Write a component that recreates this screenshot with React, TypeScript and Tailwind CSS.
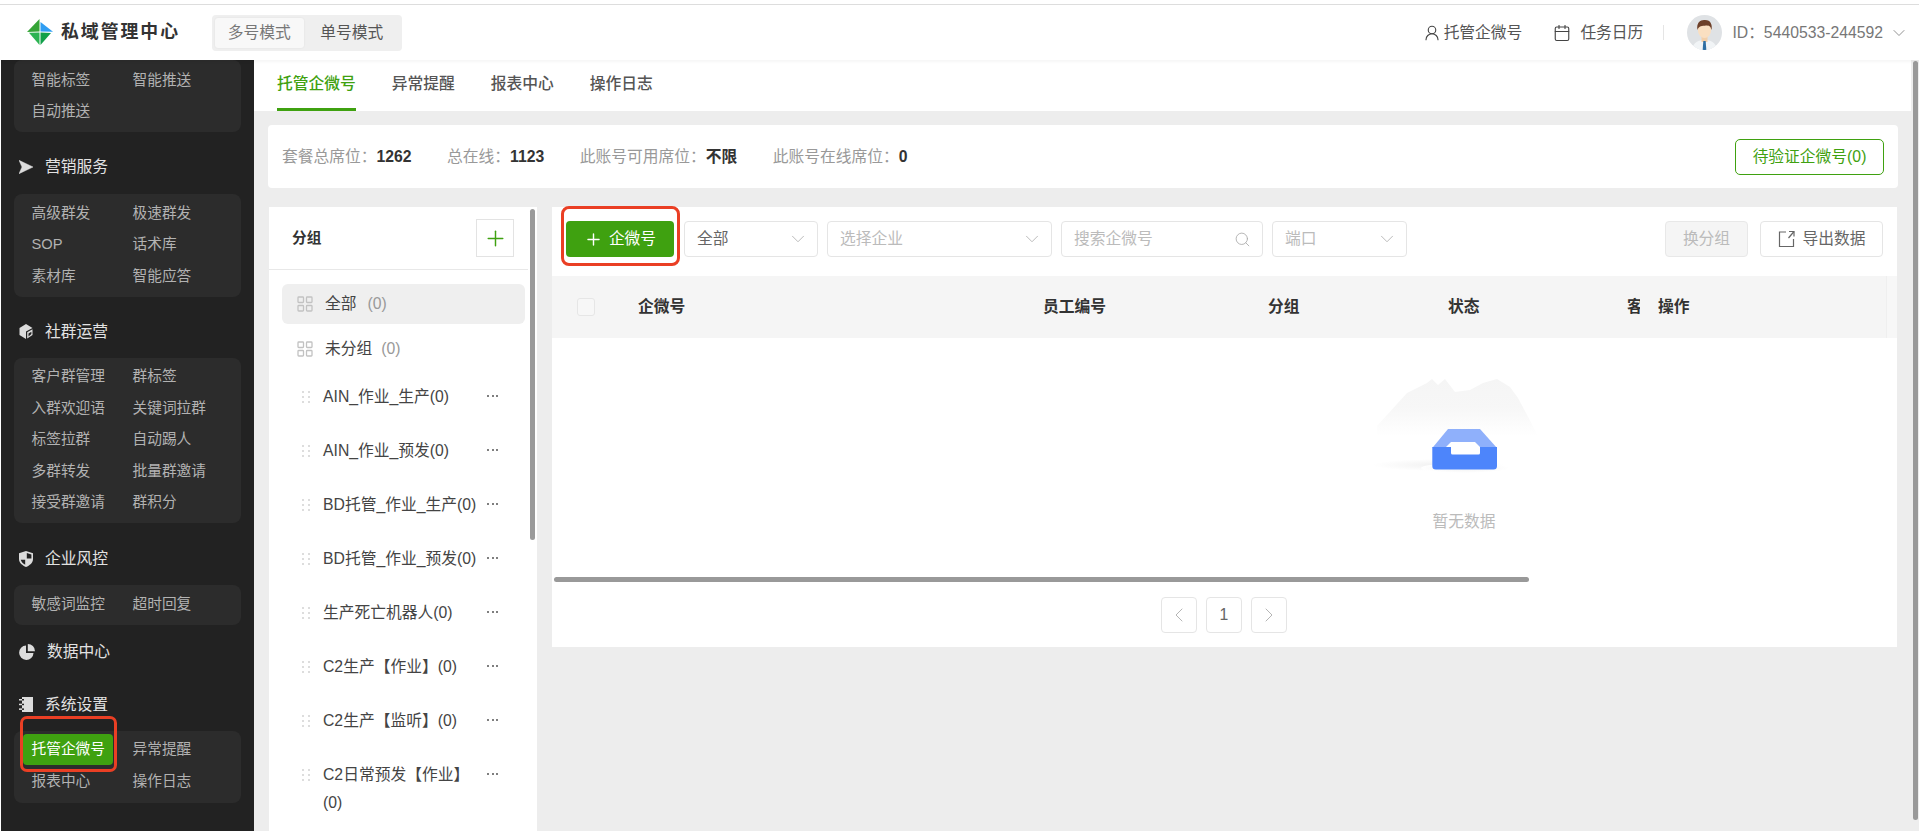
import React from "react";
import { ChevronDown, ChevronLeft, ChevronRight, Plus, Search, UserRound, Calendar } from "lucide-react";

const FONT = '"Liberation Sans","Noto Sans CJK SC",sans-serif';

function Logo() {
  return (
    <svg viewBox="0 0 26 26" className="w-[26px] h-[26px]">
      <polygon points="12.5,0 12.5,12.5 0,13" fill="#35a436" />
      <polygon points="13.5,3 13.5,12.5 26,12.8" fill="#2f9df2" />
      <polygon points="2,13.8 12.5,13.5 12.5,26" fill="#2db352" />
      <polygon points="13.5,13.5 24,14 13.5,26" fill="#12a04a" />
    </svg>
  );
}

function Avatar() {
  return (
    <svg viewBox="0 0 35 35" className="w-[35px] h-[35px]">
      <defs>
        <clipPath id="av"><circle cx="17.5" cy="17.5" r="17.5" /></clipPath>
      </defs>
      <g clipPath="url(#av)">
        <rect width="35" height="35" fill="#dfe2e5" />
        <path d="M5 35 C6 27 12 25 17.5 25 C23 25 29 27 30 35 Z" fill="#f1f4f6" />
        <rect x="14.5" y="20" width="6" height="7" fill="#f3cfa9" />
        <ellipse cx="17.5" cy="15" rx="6.6" ry="8" fill="#fadfc1" />
        <path d="M10.5 15 C9 7 14 4.5 18 5 C24 5 25.5 10 24.5 15 C23.5 11 22 10.5 19 10.5 C15 11 12 10.5 10.5 15 Z" fill="#6d3f28" />
        <polygon points="16.3,26 18.7,26 19.3,35 15.7,35" fill="#2f6ea3" />
      </g>
    </svg>
  );
}

function SendIcon() {
  return (
    <svg viewBox="0 0 14 14" className="w-[14px] h-[14px]"><polygon points="0,0.3 14,7 0,13.7 3,7" fill="#dcdcdc" stroke="#dcdcdc" strokeWidth="0.5" strokeLinejoin="round" /></svg>
  );
}
function CubeIcon() {
  return (
    <svg viewBox="0 0 14 15" className="w-[14px] h-[15px]">
      <polygon points="0.5,4 7,0 13.5,4 7,7.5 7,15 0.5,11" fill="#dcdcdc" />
      <polygon points="8.2,8.2 13.5,5.3 13.5,11 8.2,14.5" fill="#dcdcdc" />
      <path d="M9.5 9.5 L12.4 7.8 L12.4 10 L9.5 12.6 Z" fill="#222222" />
    </svg>
  );
}
function ShieldIcon() {
  return (
    <svg viewBox="0 0 14 16" className="w-[14px] h-[16px]">
      <path d="M7 0 L14 2.2 L14 8 C14 12 10.5 14.5 7 16 C3.5 14.5 0 12 0 8 L0 2.2 Z" fill="#dcdcdc" />
      <path d="M7.8 2 L12.4 3.4 L12.4 7.4 L7.8 7.4 Z" fill="#222222" />
      <path d="M1.7 8.8 L6.2 8.8 L6.2 13.8 C4 12.8 2.3 11 1.7 8.8 Z" fill="#222222" />
    </svg>
  );
}
function PieIcon() {
  return (
    <svg viewBox="0 0 16 16" className="w-[16px] h-[16px]">
      <path d="M7 1.5 A7.2 7.2 0 1 0 14.5 9 L7 9 Z" fill="#dcdcdc" />
      <path d="M8.8 0 A7.2 7.2 0 0 1 16 7.2 L8.8 7.2 Z" fill="#dcdcdc" />
    </svg>
  );
}
function BookIcon() {
  return (
    <svg viewBox="0 0 14 15" className="w-[14px] h-[15px]">
      <rect x="3" y="0" width="11" height="15" fill="#dcdcdc" />
      <rect x="0" y="2" width="3" height="1.5" fill="#dcdcdc" />
      <rect x="0" y="6.7" width="3" height="1.5" fill="#dcdcdc" />
      <rect x="0" y="11.4" width="3" height="1.5" fill="#dcdcdc" />
      <rect x="3" y="2" width="2" height="1.5" fill="#222222" />
      <rect x="3" y="6.7" width="2" height="1.5" fill="#222222" />
      <rect x="3" y="11.4" width="2" height="1.5" fill="#222222" />
    </svg>
  );
}

function ExportIcon() {
  return (
    <svg viewBox="0 0 17 18" className="w-[17px] h-[18px]" fill="none" stroke="#666666" strokeWidth="1.2">
      <path d="M8 2 H1.5 V16.5 H15.5 V9" />
      <path d="M11 1.5 H16 V6.5" />
      <path d="M16 1.5 L10.5 8" />
    </svg>
  );
}

function NavHead({ icon, label, className, gap }: { icon: React.ReactNode; label: string; className: string; gap: string }) {
  return (
    <div className={`flex items-center pl-[5px] ${gap} ${className}`}>
      {icon}
      <span className="text-[15.75px] text-[#e2e2e2]">{label}</span>
    </div>
  );
}

function NavPanel({ items, active, className = "" }: { items: string[]; active?: string; className?: string }) {
  return (
    <div className={`grid grid-cols-[101px_101px] auto-rows-[31.5px] bg-[#2c2c2c] rounded-[8px] px-[9px] pb-[5px] ${className}`}>
      {items.map((t) =>
        t === active ? (
          <div key={t} className="relative flex items-center h-[31px] w-[90px] pl-[8.5px] rounded-[4px] bg-[#3fa110] text-white text-[14.7px]">
            {t}
            <div className="absolute -left-[3px] -right-[4px] -top-[18px] -bottom-[7px] border-[3px] border-[#ea3f24] rounded-[7px]" />
          </div>
        ) : (
          <div key={t} className="flex items-center pl-[8.5px] text-[14.7px] text-[#b2b2b2] whitespace-nowrap">{t}</div>
        )
      )}
    </div>
  );
}

function Sidebar() {
  return (
    <aside className="w-[253px] shrink-0 bg-[#222222] px-[13px] overflow-hidden">
      <NavPanel items={["智能标签", "智能推送", "自动推送"]} className="pt-[4px] mb-[1px]" />
      <NavHead icon={<SendIcon />} label="营销服务" className="h-[61px] pt-[7px]" gap="gap-[12px]" />
      <NavPanel items={["高级群发", "极速群发", "SOP", "话术库", "素材库", "智能应答"]} className="pt-[3px]" />
      <NavHead icon={<CubeIcon />} label="社群运营" className="h-[61px] pt-[9px]" gap="gap-[12px]" />
      <NavPanel items={["客户群管理", "群标签", "入群欢迎语", "关键词拉群", "标签拉群", "自动踢人", "多群转发", "批量群邀请", "接受群邀请", "群积分"]} className="pt-[3px]" />
      <NavHead icon={<ShieldIcon />} label="企业风控" className="h-[62px] pt-[10px]" gap="gap-[12px]" />
      <NavPanel items={["敏感词监控", "超时回复"]} className="pt-[3px]" />
      <NavHead icon={<PieIcon />} label="数据中心" className="h-[54px]" gap="gap-[12px]" />
      <NavHead icon={<BookIcon />} label="系统设置" className="h-[52px]" gap="gap-[12px]" />
      <NavPanel items={["托管企微号", "异常提醒", "报表中心", "操作日志"]} active="托管企微号" className="pt-[3px] pb-[6px]" />
    </aside>
  );
}

function GridIcon() {
  return (
    <svg viewBox="0 0 16 16" className="w-[16px] h-[16px]" fill="none" stroke="#c2c2c2" strokeWidth="1.3">
      <rect x="1" y="1" width="5.5" height="5.5" rx="0.8" />
      <rect x="9.5" y="1" width="5.5" height="5.5" rx="0.8" />
      <rect x="1" y="9.5" width="5.5" height="5.5" rx="0.8" />
      <rect x="9.5" y="9.5" width="5.5" height="5.5" rx="0.8" />
    </svg>
  );
}

function Grip() {
  return (
    <div className="grid grid-cols-2 gap-x-[4px] gap-y-[3px] w-[8px] shrink-0">
      {[0, 1, 2, 3, 4, 5].map((i) => (
        <span key={i} className="w-[2px] h-[2px] bg-[#dddddd]" />
      ))}
    </div>
  );
}

function GroupRow({ label }: { label: string }) {
  return (
    <div className="flex items-start py-[13px] pl-[20px]">
      <div className="h-[28px] flex items-center"><Grip /></div>
      <div className="w-[158px] ml-[13px] text-[15.75px] leading-[28px] text-[#444444]">{label}</div>
      <div className="h-[26px] ml-[6px] flex items-center gap-[2.5px]">
        <span className="w-[2px] h-[2px] rounded-full bg-[#555555]" />
        <span className="w-[2px] h-[2px] rounded-full bg-[#555555]" />
        <span className="w-[2px] h-[2px] rounded-full bg-[#555555]" />
      </div>
    </div>
  );
}

function GroupPanel() {
  const rows = ["AIN_作业_生产(0)", "AIN_作业_预发(0)", "BD托管_作业_生产(0)", "BD托管_作业_预发(0)", "生产死亡机器人(0)", "C2生产【作业】(0)", "C2生产【监听】(0)", "C2日常预发【作业】(0)"];
  return (
    <section className="relative w-[268px] h-[640px] shrink-0 bg-white">
      <div className="w-[259px] h-[63px] pl-[23px] pr-[14px] flex items-center justify-between border-b border-[#e8e8e8]">
        <span className="text-[14.7px] font-bold text-[#333333]">分组</span>
        <div className="w-[38px] h-[38px] border border-[#e3e3e3] flex items-center justify-center">
          <Plus className="w-[25px] h-[25px] text-[#3fa110]" strokeWidth={1.4} />
        </div>
      </div>
      <div className="pl-[13px] pt-[14px] w-[256px]">
        <div className="flex items-center h-[40px] rounded-[6px] bg-[#efefef] pl-[15px] gap-[12px] text-[15.75px] text-[#444444]">
          <GridIcon />
          <span>全部</span>
          <span className="text-[#999999] -ml-[1px]">(0)</span>
        </div>
        <div className="flex items-center h-[40px] mt-[5px] mb-[1px] pl-[15px] gap-[12px] text-[15.75px] text-[#444444]">
          <GridIcon />
          <span>未分组</span>
          <span className="text-[#999999] -ml-[3px]">(0)</span>
        </div>
        {rows.map((r) => (
          <GroupRow key={r} label={r} />
        ))}
      </div>
      <div className="absolute left-[261px] top-[2px] w-[5px] h-[331px] rounded-[3px] bg-[#9a9a9a]" />
    </section>
  );
}

function Select({ w, label, muted }: { w: string; label: string; muted?: boolean }) {
  return (
    <div className={`flex items-center justify-between h-[36px] ${w} pl-[12px] pr-[8px] border border-[#e5e5e5] rounded-[4px] text-[15.75px] bg-white ${muted ? "text-[#bbbbbb]" : "text-[#666666]"}`}>
      <span>{label}</span>
      <ChevronDown className="w-[22px] h-[22px] text-[#b5b5b5]" strokeWidth={1} />
    </div>
  );
}

function EmptyArt() {
  return (
    <svg viewBox="0 0 208 120" className="w-[208px] h-[120px]">
      <defs>
        <linearGradient id="mt" x1="0" y1="0" x2="0" y2="1">
          <stop offset="0" stopColor="#f5f5f5" />
          <stop offset="0.5" stopColor="#f7f7f7" />
          <stop offset="1" stopColor="#ffffff" />
        </linearGradient>
        <radialGradient id="gr">
          <stop offset="0" stopColor="#f1f1f1" />
          <stop offset="1" stopColor="#ffffff" />
        </radialGradient>
      </defs>
      <path d="M17 56 L47 23 L67 13 L72 9 L78 15 L85 9 L95 22 L110 20 L123 13 L137 9 L150 17 L158 28 L166 43 L178 66 L17 66 Z" fill="url(#mt)" />
      <ellipse cx="79" cy="95" rx="66" ry="6" fill="url(#gr)" />
      <ellipse cx="105" cy="98" rx="44" ry="5" fill="url(#gr)" />
      <polygon points="72.3,78 88,59 120,59 137,78" fill="#8fb0fb" />
      <path d="M72.3 77 H137 V96 Q137 99.5 133.5 99.5 H75.8 Q72.3 99.5 72.3 96 Z" fill="#4d85fb" />
      <polygon points="86,77 91,72 115,72 120,77" fill="#ffffff" />
      <path d="M91 77 H120 V83 Q120 84.5 118.5 84.5 H92.5 Q91 84.5 91 83 Z" fill="#ffffff" />
    </svg>
  );
}

function TablePanel() {
  return (
    <section className="w-[1345px] shrink-0 bg-white">
      <div className="flex items-start h-[69px] pt-[14px] pl-[14px] pr-[14px]">
        <div className="relative mr-[10px]">
          <div className="flex items-center justify-center gap-[6px] w-[108px] h-[36px] rounded-[4px] bg-[#3fa110] text-white text-[15.75px]">
            <Plus className="w-[19px] h-[19px]" strokeWidth={1.8} />
            <span>企微号</span>
          </div>
          <div className="absolute -left-[5px] -right-[6px] -top-[15px] -bottom-[9px] border-[3px] border-[#ea3f24] rounded-[8px]" />
        </div>
        <div className="flex gap-[9px]">
          <Select w="w-[134px]" label="全部" />
          <Select w="w-[225px]" label="选择企业" muted />
          <div className="flex items-center justify-between h-[36px] w-[202px] pl-[12px] pr-[11px] border border-[#e5e5e5] rounded-[4px] text-[15.75px] text-[#bbbbbb]">
            <span>搜索企微号</span>
            <Search className="w-[17px] h-[17px] text-[#aaaaaa]" strokeWidth={1.2} />
          </div>
          <Select w="w-[135px]" label="端口" muted />
        </div>
        <div className="ml-auto flex items-center gap-[12px]">
          <div className="flex items-center justify-center w-[83px] h-[36px] rounded-[4px] border border-[#e8e8e8] bg-[#f5f5f5] text-[15.75px] text-[#bbbbbb]">换分组</div>
          <div className="flex items-center justify-center gap-[8px] w-[123px] h-[36px] rounded-[4px] border border-[#e5e5e5] text-[15.75px] text-[#666666]">
            <ExportIcon />
            <span>导出数据</span>
          </div>
        </div>
      </div>
      <div className="flex h-[62px] bg-[#f7f7f7]">
        <div className="w-[1335px] grid grid-cols-[86px_405px_225px_180px_179px_31px_1fr] items-center bg-[#f5f5f5] border-r border-[#efefef] text-[15.75px] font-bold text-[#333333]">
          <div className="pl-[25px]"><div className="w-[18px] h-[18px] rounded-[3px] border border-[#e6e6e6] bg-[#f7f7f7]" /></div>
          <div>企微号</div>
          <div>员工编号</div>
          <div>分组</div>
          <div>状态</div>
          <div className="overflow-hidden whitespace-nowrap w-[12.5px]">客户</div>
          <div>操作</div>
        </div>
      </div>
      <div className="h-[239px] overflow-hidden">
        <div className="w-[1824px] flex flex-col items-center pt-[32px]">
          <EmptyArt />
          <div className="mt-[20px] text-[15.75px] leading-[24px] text-[#bbbbbb]">暂无数据</div>
        </div>
      </div>
      <div className="ml-[2px] w-[975px] h-[5px] rounded-[3px] bg-[#999999]" />
      <div className="flex justify-center gap-[9px] mt-[15px] pb-[14px] pr-[1px]">
        <div className="w-[36px] h-[36px] rounded-[4px] border border-[#e5e5e5] flex items-center justify-center"><ChevronLeft className="w-[24px] h-[24px] text-[#b5b5b5]" strokeWidth={1} /></div>
        <div className="w-[36px] h-[36px] rounded-[4px] border border-[#e5e5e5] flex items-center justify-center text-[15.75px] text-[#666666]">1</div>
        <div className="w-[36px] h-[36px] rounded-[4px] border border-[#e5e5e5] flex items-center justify-center"><ChevronRight className="w-[24px] h-[24px] text-[#b5b5b5]" strokeWidth={1} /></div>
      </div>
    </section>
  );
}

function Stat({ label, value }: { label: string; value: string }) {
  return (
    <div className="text-[15.75px] whitespace-nowrap">
      <span className="text-[#999999]">{label}</span>
      <span className="font-bold text-[#333333]">{value}</span>
    </div>
  );
}

export default function App() {
  return (
    <div className="w-[1919px] h-[831px] overflow-hidden flex flex-col bg-white" style={{ fontFamily: FONT }}>
      <header className="relative z-10 h-[60px] shrink-0 pt-[4px] bg-white shadow-[0_1px_4px_rgba(0,0,0,0.06)]">
        <div className="h-[56px] border-t border-[#dddddd] flex items-center pr-[10px]">
          <div className="w-[212px] shrink-0 flex items-center pl-[27px] gap-[8px]">
            <Logo />
            <span className="text-[17.85px] font-bold tracking-[2px] text-[#333333] whitespace-nowrap">私域管理中心</span>
          </div>
          <div className="flex items-center w-[190px] h-[36px] p-[3px] rounded-[4px] bg-[#efefef] text-[15.75px]">
            <div className="flex items-center justify-center w-[90px] h-[30px] rounded-[3px] bg-[#f8f8f8] shadow-[0_0_2px_rgba(0,0,0,0.08)] text-[#777777]">多号模式</div>
            <div className="flex items-center justify-center w-[96px] ml-[1px] h-[30px] text-[#555555]">单号模式</div>
          </div>
          <div className="ml-auto flex items-center text-[15.75px] text-[#555555]">
            <UserRound className="w-[18px] h-[18px] text-[#444444] mr-[3px]" strokeWidth={1.5} />
            <span>托管企微号</span>
            <Calendar className="w-[18px] h-[18px] text-[#444444] ml-[31px] mr-[9px]" strokeWidth={1.5} />
            <span>任务日历</span>
            <div className="w-px h-[15px] bg-[#e5e5e5] ml-[20px] mr-[23px]" />
            <Avatar />
            <span className="ml-[10px] text-[#777777] whitespace-nowrap">ID：5440533-244592</span>
            <ChevronDown className="w-[20px] h-[20px] text-[#888888] ml-[6px]" strokeWidth={1.1} />
          </div>
        </div>
      </header>
      <div className="flex flex-1 min-h-0 pl-[1px]">
        <Sidebar />
        <main className="relative flex-1 min-w-0 bg-[#ededed] overflow-hidden">
          <nav className="w-[1657px] h-[51px] bg-white flex pl-[23px] gap-[36px] text-[15.75px] text-[#555555] font-medium">
            <div className="h-[51px] pt-[12px] border-b-[3px] border-[#3fa110] text-[#3fa110]">托管企微号</div>
            <div className="pt-[12px]">异常提醒</div>
            <div className="pt-[12px]">报表中心</div>
            <div className="pt-[12px]">操作日志</div>
          </nav>
          <div className="ml-[14px] mt-[14px] w-[1630px] h-[63px] rounded-[4px] bg-white flex items-center pl-[14px] pr-[14px] gap-[35.5px]">
            <Stat label="套餐总席位：" value="1262" />
            <Stat label="总在线：" value="1123" />
            <Stat label="此账号可用席位：" value="不限" />
            <Stat label="此账号在线席位：" value="0" />
            <div className="ml-auto flex items-center justify-center w-[149px] h-[36px] rounded-[5px] border border-[#3fa110] text-[15.75px] text-[#3fa110]">待验证企微号(0)</div>
          </div>
          <div className="flex items-start gap-[15px] ml-[15px] mt-[19px]">
            <GroupPanel />
            <TablePanel />
          </div>
          <div className="absolute right-[1px] top-[1px] w-[5px] h-[759px] rounded-[3px] bg-[#999999]" />
        </main>
      </div>
    </div>
  );
}
